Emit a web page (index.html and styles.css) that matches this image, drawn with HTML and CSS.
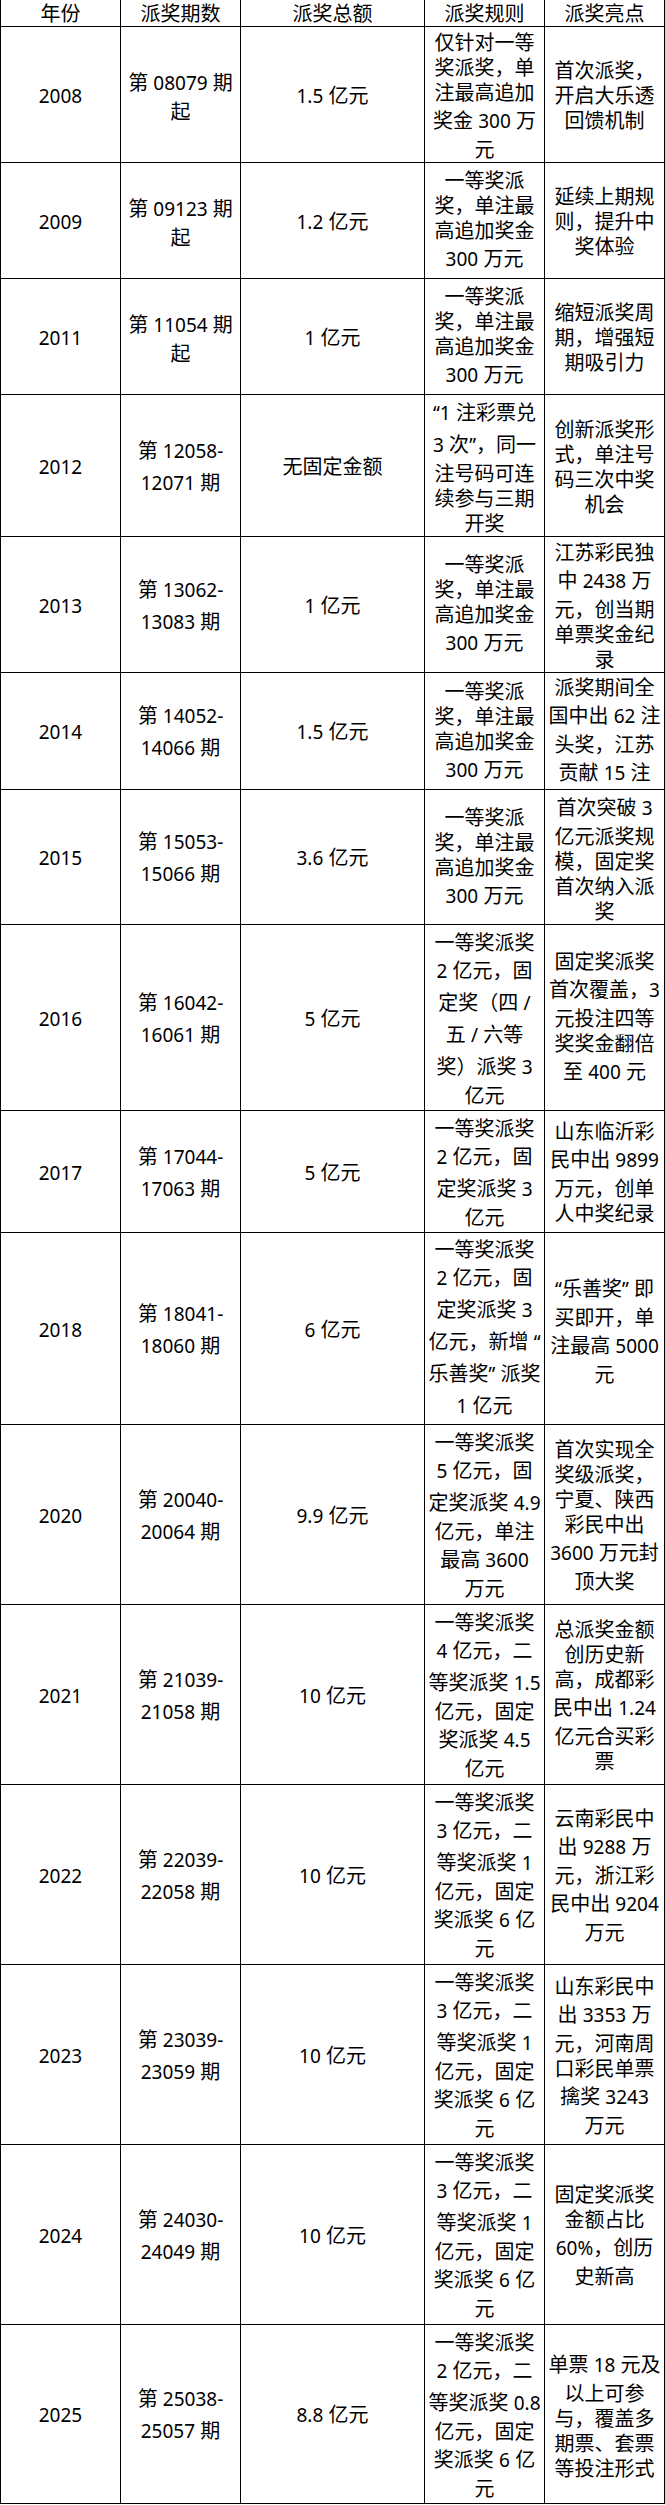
FILE: index.html
```html
<!DOCTYPE html>
<html lang="zh-CN">
<head>
<meta charset="utf-8">
<title>大乐透派奖历史</title>
<link rel="stylesheet" href="styles.css">
</head>
<body>
<table class="award-table">
  <colgroup>
    <col class="c-year">
    <col class="c-issue">
    <col class="c-total">
    <col class="c-rule">
    <col class="c-note">
  </colgroup>
  <thead>
    <tr class="r-head">
      <th>年份</th><th>派奖期数</th><th>派奖总额</th><th>派奖规则</th><th>派奖亮点</th>
    </tr>
  </thead>
  <tbody>
    <tr class="r2008">
      <td><span class="n">2008</span></td>
      <td>第 <span class="n">08079</span> 期<br>起</td>
      <td><span class="n">1.5</span> 亿元</td>
      <td>仅针对一等<br>奖派奖，单<br>注最高追加<br>奖金 <span class="n">300</span> 万<br>元</td>
      <td>首次派奖，<br>开启大乐透<br>回馈机制</td>
    </tr>
    <tr class="r2009">
      <td><span class="n">2009</span></td>
      <td>第 <span class="n">09123</span> 期<br>起</td>
      <td><span class="n">1.2</span> 亿元</td>
      <td>一等奖派<br>奖，单注最<br>高追加奖金<br><span class="n">300</span> 万元</td>
      <td>延续上期规<br>则，提升中<br>奖体验</td>
    </tr>
    <tr class="r2011">
      <td><span class="n">2011</span></td>
      <td>第 <span class="n">11054</span> 期<br>起</td>
      <td><span class="n">1</span> 亿元</td>
      <td>一等奖派<br>奖，单注最<br>高追加奖金<br><span class="n">300</span> 万元</td>
      <td>缩短派奖周<br>期，增强短<br>期吸引力</td>
    </tr>
    <tr class="r2012">
      <td><span class="n">2012</span></td>
      <td>第 <span class="n">12058-</span><br><span class="n">12071</span> 期</td>
      <td>无固定金额</td>
      <td><span class="n">“1</span> 注彩票兑<br><span class="n">3</span> 次<span class="n">”</span>，同一<br>注号码可连<br>续参与三期<br>开奖</td>
      <td>创新派奖形<br>式，单注号<br>码三次中奖<br>机会</td>
    </tr>
    <tr class="r2013">
      <td><span class="n">2013</span></td>
      <td>第 <span class="n">13062-</span><br><span class="n">13083</span> 期</td>
      <td><span class="n">1</span> 亿元</td>
      <td>一等奖派<br>奖，单注最<br>高追加奖金<br><span class="n">300</span> 万元</td>
      <td>江苏彩民独<br>中 <span class="n">2438</span> 万<br>元，创当期<br>单票奖金纪<br>录</td>
    </tr>
    <tr class="r2014">
      <td><span class="n">2014</span></td>
      <td>第 <span class="n">14052-</span><br><span class="n">14066</span> 期</td>
      <td><span class="n">1.5</span> 亿元</td>
      <td>一等奖派<br>奖，单注最<br>高追加奖金<br><span class="n">300</span> 万元</td>
      <td>派奖期间全<br>国中出 <span class="n">62</span> 注<br>头奖，江苏<br>贡献 <span class="n">15</span> 注</td>
    </tr>
    <tr class="r2015">
      <td><span class="n">2015</span></td>
      <td>第 <span class="n">15053-</span><br><span class="n">15066</span> 期</td>
      <td><span class="n">3.6</span> 亿元</td>
      <td>一等奖派<br>奖，单注最<br>高追加奖金<br><span class="n">300</span> 万元</td>
      <td>首次突破 <span class="n">3</span><br>亿元派奖规<br>模，固定奖<br>首次纳入派<br>奖</td>
    </tr>
    <tr class="r2016">
      <td><span class="n">2016</span></td>
      <td>第 <span class="n">16042-</span><br><span class="n">16061</span> 期</td>
      <td><span class="n">5</span> 亿元</td>
      <td>一等奖派奖<br><span class="n">2</span> 亿元，固<br>定奖（四 <span class="n">/</span><br>五 <span class="n">/</span> 六等<br>奖）派奖 <span class="n">3</span><br>亿元</td>
      <td>固定奖派奖<br>首次覆盖，<span class="n">3</span><br>元投注四等<br>奖奖金翻倍<br>至 <span class="n">400</span> 元</td>
    </tr>
    <tr class="r2017">
      <td><span class="n">2017</span></td>
      <td>第 <span class="n">17044-</span><br><span class="n">17063</span> 期</td>
      <td><span class="n">5</span> 亿元</td>
      <td>一等奖派奖<br><span class="n">2</span> 亿元，固<br>定奖派奖 <span class="n">3</span><br>亿元</td>
      <td>山东临沂彩<br>民中出 <span class="n">9899</span><br>万元，创单<br>人中奖纪录</td>
    </tr>
    <tr class="r2018">
      <td><span class="n">2018</span></td>
      <td>第 <span class="n">18041-</span><br><span class="n">18060</span> 期</td>
      <td><span class="n">6</span> 亿元</td>
      <td>一等奖派奖<br><span class="n">2</span> 亿元，固<br>定奖派奖 <span class="n">3</span><br>亿元，新增 <span class="n">“</span><br>乐善奖<span class="n">”</span> 派奖<br><span class="n">1</span> 亿元</td>
      <td><span class="n">“</span>乐善奖<span class="n">”</span> 即<br>买即开，单<br>注最高 <span class="n">5000</span><br>元</td>
    </tr>
    <tr class="r2020">
      <td><span class="n">2020</span></td>
      <td>第 <span class="n">20040-</span><br><span class="n">20064</span> 期</td>
      <td><span class="n">9.9</span> 亿元</td>
      <td>一等奖派奖<br><span class="n">5</span> 亿元，固<br>定奖派奖 <span class="n">4.9</span><br>亿元，单注<br>最高 <span class="n">3600</span><br>万元</td>
      <td>首次实现全<br>奖级派奖，<br>宁夏、陕西<br>彩民中出<br><span class="n">3600</span> 万元封<br>顶大奖</td>
    </tr>
    <tr class="r2021">
      <td><span class="n">2021</span></td>
      <td>第 <span class="n">21039-</span><br><span class="n">21058</span> 期</td>
      <td><span class="n">10</span> 亿元</td>
      <td>一等奖派奖<br><span class="n">4</span> 亿元，二<br>等奖派奖 <span class="n">1.5</span><br>亿元，固定<br>奖派奖 <span class="n">4.5</span><br>亿元</td>
      <td>总派奖金额<br>创历史新<br>高，成都彩<br>民中出 <span class="n">1.24</span><br>亿元合买彩<br>票</td>
    </tr>
    <tr class="r2022">
      <td><span class="n">2022</span></td>
      <td>第 <span class="n">22039-</span><br><span class="n">22058</span> 期</td>
      <td><span class="n">10</span> 亿元</td>
      <td>一等奖派奖<br><span class="n">3</span> 亿元，二<br>等奖派奖 <span class="n">1</span><br>亿元，固定<br>奖派奖 <span class="n">6</span> 亿<br>元</td>
      <td>云南彩民中<br>出 <span class="n">9288</span> 万<br>元，浙江彩<br>民中出 <span class="n">9204</span><br>万元</td>
    </tr>
    <tr class="r2023">
      <td><span class="n">2023</span></td>
      <td>第 <span class="n">23039-</span><br><span class="n">23059</span> 期</td>
      <td><span class="n">10</span> 亿元</td>
      <td>一等奖派奖<br><span class="n">3</span> 亿元，二<br>等奖派奖 <span class="n">1</span><br>亿元，固定<br>奖派奖 <span class="n">6</span> 亿<br>元</td>
      <td>山东彩民中<br>出 <span class="n">3353</span> 万<br>元，河南周<br>口彩民单票<br>擒奖 <span class="n">3243</span><br>万元</td>
    </tr>
    <tr class="r2024">
      <td><span class="n">2024</span></td>
      <td>第 <span class="n">24030-</span><br><span class="n">24049</span> 期</td>
      <td><span class="n">10</span> 亿元</td>
      <td>一等奖派奖<br><span class="n">3</span> 亿元，二<br>等奖派奖 <span class="n">1</span><br>亿元，固定<br>奖派奖 <span class="n">6</span> 亿<br>元</td>
      <td>固定奖派奖<br>金额占比<br><span class="n">60%</span>，创历<br>史新高</td>
    </tr>
    <tr class="r2025">
      <td><span class="n">2025</span></td>
      <td>第 <span class="n">25038-</span><br><span class="n">25057</span> 期</td>
      <td><span class="n">8.8</span> 亿元</td>
      <td>一等奖派奖<br><span class="n">2</span> 亿元，二<br>等奖派奖 <span class="n">0.8</span><br>亿元，固定<br>奖派奖 <span class="n">6</span> 亿<br>元</td>
      <td>单票 <span class="n">18</span> 元及<br>以上可参<br>与，覆盖多<br>期票、套票<br>等投注形式</td>
    </tr>
  </tbody>
</table>
</body>
</html>
```

FILE: styles.css
```css
* {
  box-sizing: border-box;
}

html,
body {
  margin: 0;
  padding: 0;
  background: #ffffff;
}

body {
  font-family: "Noto Sans", "Noto Sans CJK SC", sans-serif;
  color: #000000;
}

.award-table {
  width: 665px;
  table-layout: fixed;
  border-collapse: separate;
  border-spacing: 0;
  font-size: 20px;
  line-height: 25px;
}

.c-year { width: 121px; }
.c-issue { width: 120px; }
.c-total { width: 184px; }
.c-rule { width: 120px; }
.c-note { width: 120px; }

.award-table th,
.award-table td {
  padding: 2px 0 0;
  text-align: center;
  vertical-align: middle;
  white-space: nowrap;
  font-weight: normal;
  border-right: 1px solid #000000;
  border-bottom: 1px solid #000000;
}

.award-table th:first-child,
.award-table td:first-child {
  border-left: 1px solid #000000;
}

.award-table th {
  line-height: 24px;
}

.n {
  font-size: 19px;
  line-height: 32px;
}

.r-head { height: 27px; }
.r2008 { height: 136px; }
.r2009 { height: 116px; }
.r2011 { height: 116px; }
.r2012 { height: 142px; }
.r2013 { height: 136px; }
.r2014 { height: 117px; }
.r2015 { height: 135px; }
.r2016 { height: 186px; }
.r2017 { height: 122px; }
.r2018 { height: 192px; }
.r2020 { height: 180px; }
.r2021 { height: 180px; }
.r2022 { height: 180px; }
.r2023 { height: 180px; }
.r2024 { height: 180px; }
.r2025 { height: 179px; }
```
